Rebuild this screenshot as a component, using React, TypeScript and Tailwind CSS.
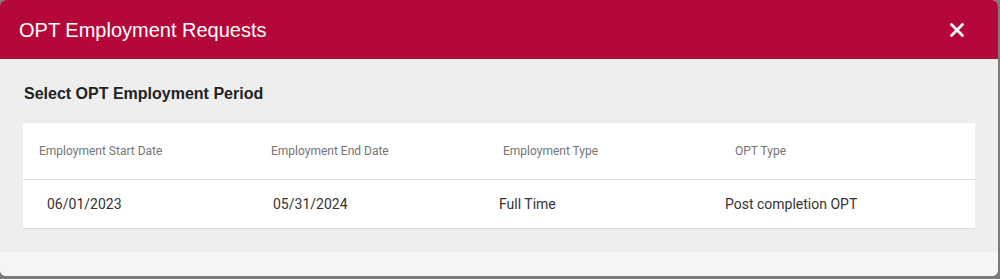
import { X } from 'lucide-react';

const COLUMNS = [
  { label: 'Employment Start Date', value: '06/01/2023', pad: 'pl-[24px]' },
  { label: 'Employment End Date', value: '05/31/2024', pad: 'pl-[18px]' },
  { label: 'Employment Type', value: 'Full Time', pad: 'pl-[12px]' },
  { label: 'OPT Type', value: 'Post completion OPT', pad: 'pl-[6px]' },
];

export default function App() {
  return (
    <div className="w-[1000px] h-[279px] bg-[#7b7b7b] overflow-hidden">
      <div className="w-[998px] h-[276px] rounded-[6px] overflow-hidden flex flex-col bg-[#eeeeee]">
        <div className="h-[59px] bg-[#b5083a] flex items-center justify-between pl-[19px] pr-[30px] shrink-0">
          <h1 className="text-white text-[20px] font-['Liberation_Sans',Arial,sans-serif] leading-none">
            OPT Employment Requests
          </h1>
          <X className="text-white" size={22} strokeWidth={3} />
        </div>

        <div className="flex-1 px-[23px] pt-[25px]">
          <h2 className="pl-px text-[16px] font-bold text-[#222222] font-['Liberation_Sans',Arial,sans-serif] leading-[20px] mb-[19px]">
            Select OPT Employment Period
          </h2>
          <div className="w-[952px] bg-white border-b border-[#dcdcdc] font-['Roboto',sans-serif]">
            <div className="grid grid-cols-[232px_232px_232px_1fr] h-[57px] items-center border-b border-[#e0e0e0]">
              {COLUMNS.map(c => (
                <div key={c.label} className="pl-[16px] text-[12px] text-[#757575]">
                  {c.label}
                </div>
              ))}
            </div>
            <div className="grid grid-cols-[232px_232px_232px_1fr] h-[48px] items-center">
              {COLUMNS.map(c => (
                <div key={c.label} className={`${c.pad} text-[14px] text-[#333333]`}>
                  {c.value}
                </div>
              ))}
            </div>
          </div>
        </div>

        <div className="h-[24px] bg-[#f5f5f5] shrink-0" />
      </div>
    </div>
  );
}
